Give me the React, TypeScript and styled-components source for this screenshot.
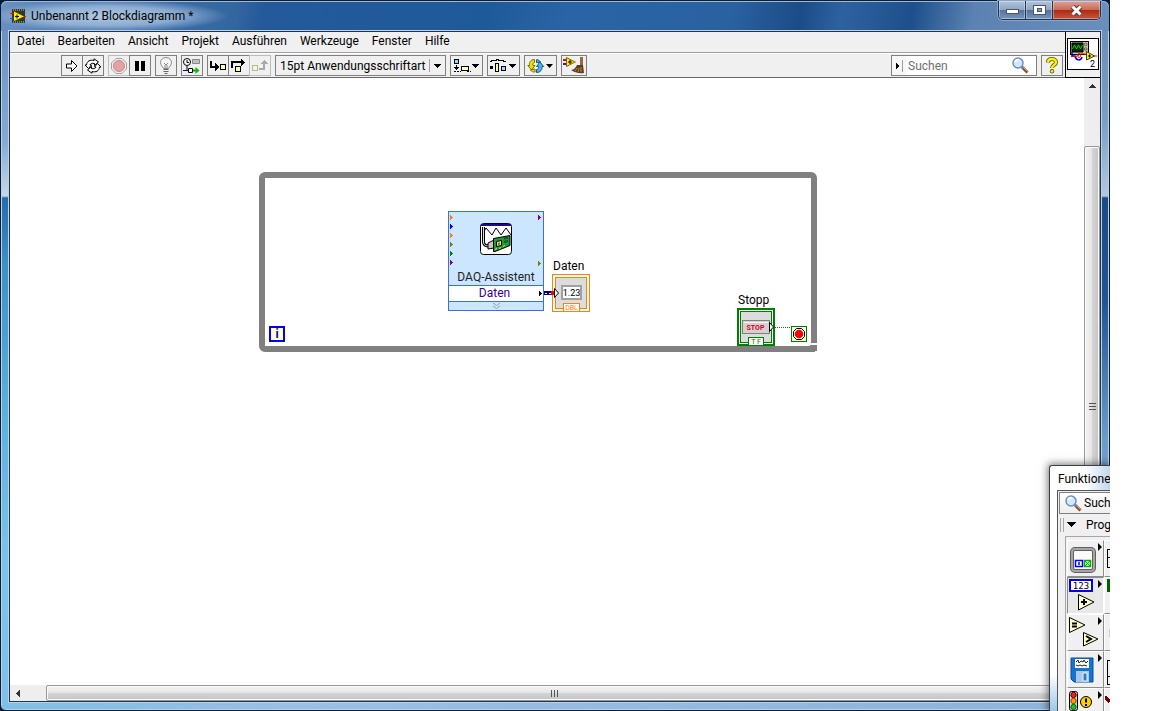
import React from "react";
import styled, { createGlobalStyle, css } from "styled-components";

const ink = "#000000";
const face = "#f0f0f0";
const line = "#7f7f7f";
const wireGreen = "#008000";
const orange = "#ff8000";

const GlobalStyle = createGlobalStyle`
  *, *::before, *::after { box-sizing: border-box; }
  body { margin: 0; background: #ffffff; color: ${ink}; font: 12px/16px Roboto, "Liberation Sans", sans-serif; }
  button, input, select { font: inherit; color: inherit; margin: 0; padding: 0; border-radius: 0; }
  svg { display: block; flex: none; }
`;

/* ---------- window frame ---------- */

const Desktop = styled.div`
  height: 100vh;
  padding-right: 42px;
  overflow: hidden;
`;

const Screen = styled.div`
  position: relative;
  height: 100%;
  overflow: hidden;
  background: #0b1a33;
`;

const Window = styled.main`
  display: flex;
  flex-direction: column;
  height: 100%;
  padding: 0 8px 8px;
  border: 1px solid #0a1c38;
  border-radius: 7px 7px 6px 6px;
  box-shadow: inset 0 0 0 1px #b9d3ea;
  background:
    linear-gradient(180deg, #6d93c2 31px, #85a9d2 140px, #c6d8ea 195px, #276bab 197px, #3b90c6 260px, #57b0da 400px, #7cc3ea 560px, #7fc0e8 100%) left top / 9px 100% no-repeat,
    linear-gradient(180deg, #6f8fb8 31px, #7d9dc4 120px, #b4c7dd 195px, #1c4a84 197px, #1f5590 300px, #6d9cc9 440px, #8db6dc 100%) right top / 9px 100% no-repeat,
    linear-gradient(90deg, #7fc0e8 0, #82bfe6 60px, #9bbfe2 300px, #8fb2d8 100%);
`;

const TitleBar = styled.header`
  display: flex;
  align-items: flex-start;
  height: 30px;
  margin: 0 -8px;
  padding: 0 8px 0 9px;
  border-radius: 6px 6px 0 0;
  box-shadow: inset 0 1px 0 #9db9dc;
  background:
    radial-gradient(ellipse 120px 16px at 108px 15px, rgba(214, 228, 243, 0.75) 0, rgba(190, 211, 234, 0.6) 60%, rgba(160, 188, 220, 0) 100%),
    linear-gradient(100deg, #6c91c0 0, #4575b0 90px, #33659f 235px, #245a9a 260px, #1f5a98 480px, #2a64a4 560px, #2a62a0 720px, #1c4c86 790px, #2e629f 830px, #1e4f8b 900px, #5b82b2 960px, #6a8fbc 100%);
`;

const TitleText = styled.h1`
  flex: 1;
  display: flex;
  align-items: center;
  gap: 5px;
  margin: 0;
  height: 30px;
  font-size: 12px;
  font-weight: 400;
`;

const CaptionButtons = styled.div`
  display: flex;
  border: 1px solid #26344b;
  border-top: 0;
  border-radius: 0 0 5px 5px;
  overflow: hidden;
  box-shadow: 0 0 0 1px #86a5cb;
`;

const CaptionButton = styled.button<{ $close?: boolean }>`
  display: grid;
  place-items: center;
  width: ${(p) => (p.$close ? 47 : 27)}px;
  height: 18px;
  border: 0;
  border-right: ${(p) => (p.$close ? "0" : "1px solid #26344b")};
  box-shadow: inset 0 0 0 1px rgba(255, 255, 255, 0.35);
  background: ${(p) =>
    p.$close
      ? "linear-gradient(180deg, #dda396 0, #cb6a59 48%, #ae2a16 52%, #c4573f 100%)"
      : "linear-gradient(180deg, #b3c3d8 0, #8ea6c6 48%, #53749f 52%, #7795bd 100%)"};
`;

const Client = styled.div`
  flex: 1;
  min-height: 0;
  display: flex;
  flex-direction: column;
  border: 1px solid #22344c;
  outline: 1px solid #b9d3ea;
  background: #ffffff;
`;

/* ---------- menu and toolbar ---------- */

const Head = styled.div`
  display: flex;
  height: 46px;
  background: ${face};
`;

const HeadMain = styled.div`
  flex: 1;
  display: flex;
  flex-direction: column;
  border-bottom: 1px solid #666666;
`;

const Menu = styled.nav`
  display: flex;
  align-items: center;
  gap: 13px;
  height: 21px;
  padding: 0 7px 2px;
  border-bottom: 1px solid #a0a0a0;
`;

const MenuItem = styled.button`
  border: 0;
  background: none;
`;

const Toolbar = styled.div`
  flex: 1;
  display: flex;
  align-items: center;
  gap: 4px;
  padding: 0 2px 0 51px;
  border-top: 1px solid #ffffff;
`;

const Group = styled.div`
  display: flex;
  button + button { margin-left: -1px; }
`;

const ToolButton = styled.button<{ $w?: number }>`
  display: flex;
  align-items: center;
  justify-content: center;
  width: ${(p) => p.$w ?? 22}px;
  height: 21px;
  border: 1px solid ${line};
  background: ${face};
  &:disabled { border-color: #bdbdbd; }
`;

const FontPicker = styled.label`
  position: relative;
  width: 171px;
  height: 21px;
  border: 1px solid ${line};
  background: ${face};
  select {
    width: 100%;
    height: 100%;
    padding: 0 18px 0 4px;
    border: 0;
    background: none;
    appearance: none;
  }
  svg { position: absolute; right: 0; top: 0; pointer-events: none; }
`;

const Spacer = styled.div`flex: 1;`;

const SearchBox = styled.div`
  display: flex;
  align-items: center;
  width: 146px;
  height: 21px;
  padding-right: 7px;
  border: 1px solid ${line};
  background: #ffffff;
  input {
    flex: 1;
    min-width: 0;
    border: 0;
    outline: 0;
    background: none;
    padding-left: 2px;
  }
  input::placeholder { color: #707070; opacity: 1; }
  button { border: 0; background: none; }
`;

const IconPane = styled.div`
  width: 35px;
  padding: 6px 1px;
  border-left: 1px solid ${ink};
  border-bottom: 1px solid ${ink};
`;

/* ---------- work area ---------- */

const Work = styled.div`
  flex: 1;
  min-height: 0;
  display: grid;
  grid-template-columns: 1fr 16px;
  grid-template-rows: 1fr 16px;
`;

const Canvas = styled.section`
  position: relative;
  overflow: hidden;
`;

const Track = styled.div<{ $vertical?: boolean }>`
  display: flex;
  flex-direction: ${(p) => (p.$vertical ? "column" : "row")};
  padding: ${(p) => (p.$vertical ? "0 0 20px" : "0 20px 0 0")};
  background: #eeeeee;
`;

const ScrollArrow = styled.button<{ $vertical?: boolean }>`
  display: grid;
  place-items: center;
  width: 16px;
  height: 16px;
  margin: ${(p) => (p.$vertical ? "0 0 52px" : "0 20px 0 0")};
  border: 0;
  background: none;
`;

const Thumb = styled.div<{ $vertical?: boolean }>`
  flex: 1;
  display: grid;
  place-items: center;
  border: 1px solid #979797;
  border-radius: 2px;
  box-shadow: inset 0 0 0 1px #fafafa;
  background: linear-gradient(${(p) => (p.$vertical ? "90deg" : "180deg")}, #f4f4f4 0, #e6e6e6 46%, #d3d3d3 54%, #c4c4c4 100%);
`;

const Corner = styled.div`background: ${face};`;

/* ---------- block diagram nodes, placed freely on the canvas ---------- */

const Node = styled.div<{ $x: number; $y: number }>`
  position: absolute;
  left: ${(p) => p.$x}px;
  top: ${(p) => p.$y}px;
`;

const Loop = styled(Node)`
  width: 558px;
  height: 180px;
  border: 6px solid #808080;
  border-radius: 6px 6px 0 6px;
`;

const Express = styled(Node)`
  display: flex;
  flex-direction: column;
  align-items: center;
  width: 96px;
  height: 100px;
  border: 1px solid #3b6fe8;
  background: #cce6ff;
`;

const ExpressBody = styled.div`
  display: flex;
  justify-content: space-between;
  width: 100%;
  height: 57px;
  padding: 3px 1px 0;
`;

const ExpressIcon = styled.div`padding-top: 8px;`;

const ExpressName = styled.div`
  height: 16px;
  line-height: 16px;
  color: #222222;
`;

const ExpressOutput = styled.div`
  position: relative;
  width: 100%;
  height: 17px;
  padding-right: 3px;
  border: solid #3b6fe8;
  border-width: 1px 0;
  background: #ffffff;
  color: #330099;
  line-height: 15px;
  text-align: center;
  svg { position: absolute; right: 0; top: 5px; }
`;

const Constant = styled(Node)`
  width: 16px;
  height: 16px;
  border: 2px solid #0000ff;
  background: #ffffcc;
  color: #0000c8;
  font-weight: 700;
  line-height: 12px;
  text-align: center;
`;

/* ---------- functions palette, floating over the window ---------- */

const Palette = styled.aside`
  position: absolute;
  right: 0;
  top: 465px;
  bottom: 0;
  width: 61px;
  display: flex;
  flex-direction: column;
  padding-left: 7px;
  overflow: hidden;
  border: solid #3a3f46;
  border-width: 1px 0 0 1px;
  border-top-left-radius: 3px;
  background: linear-gradient(180deg, rgba(255, 255, 255, 0) 85%, #9cc6e8 100%), linear-gradient(90deg, #ffffff 0, #fbfdff 60%, #c3d6ea 100%);
`;

const PaletteShadow = styled.div`
  position: absolute;
  right: 0;
  top: 465px;
  bottom: 0;
  width: 60px;
  box-shadow: -1px 0 8px 1px rgba(0, 0, 0, 0.55);
`;

const PaletteTitle = styled.h2`
  margin: 0;
  height: 24px;
  padding-left: 1px;
  font-size: 12px;
  font-weight: 400;
  line-height: 26px;
  white-space: nowrap;
`;

const PaletteBody = styled.div`
  flex: 1;
  min-height: 0;
  overflow: hidden;
  border: solid #555555;
  border-width: 1px 0 0 1px;
  background: ${face};
`;

const PaletteSearch = styled.button`
  display: flex;
  align-items: center;
  gap: 2px;
  width: 80px;
  height: 22px;
  margin: 1px 0 0 1px;
  padding-left: 5px;
  border: 1px solid ${line};
  background: linear-gradient(180deg, #ffffff, #eeeeee);
`;

const PaletteCategory = styled.button`
  display: flex;
  align-items: center;
  gap: 10px;
  height: 22px;
  padding-left: 2px;
  border: 0;
  background: none;
`;

const PaletteGrid = styled.div`
  display: grid;
  grid-template-columns: 37px 37px;
  grid-auto-rows: 37px;
  width: 80px;
  margin-left: 7px;
  padding: 3px 1px;
  border: solid #a6a6a6;
  border-width: 1px 0 0 1px;
`;

const PaletteCell = styled.button<{ $active?: boolean }>`
  border: 1px solid;
  border-color: #ffffff #8c8c8c #8c8c8c #ffffff;
  background: ${face};
  overflow: hidden;
  ${(p) => p.$active && css`border-color: #8c8c8c #ffffff #ffffff #8c8c8c; background: #e8e8e8;`}
`;

/* ---------- drawings ---------- */

const Svg = ({ w, h, crisp = true, children }: { w: number; h: number; crisp?: boolean; children: React.ReactNode }) => (
  <svg width={w} height={h} viewBox={`0 0 ${w} ${h}`} shapeRendering={crisp ? "crispEdges" : "auto"} fill="none" aria-hidden="true">
    {children}
  </svg>
);

const AppIcon = () => (
  <Svg w={16} h={14} crisp={false}>
    <path d="M2 0h13v14H2z" fill="#2f3a2a" />
    <path d="M3 1h11M3 13h11" stroke="#c8c8a8" strokeDasharray="1 1" />
    <path d="M0 4.500h4" stroke="#ff0000" />
    <path d="M0 9.500h4" stroke="#2040ff" />
    <path d="M13 7.500h3" stroke="#ff0000" />
    <path d="M4 2.500l10 5-10 4.500z" fill="#ffee00" />
    <path d="M5 7.500h4M7 5.500v4" stroke="#111" />
  </Svg>
);

const RunIcon = () => (
  <Svg w={14} h={14} crisp={false}>
    <path d="M1.500 5h5V1.500L12 7l-5.500 5.500V9h-5z" fill="#fff" stroke="#000" />
  </Svg>
);

const RunContinuousIcon = () => (
  <Svg w={18} h={16} crisp={false}>
    <path d="M2.500 7C3 3 6 1.500 10 2.500V.8L14.500 4 10.500 7.500V5.500C8 5 6.500 5.500 6 7h1.500L4.500 10.500 1 7z" fill="#fff" stroke="#000" />
    <path d="M15.500 9c-.5 4-3.500 5.500-7.500 4.500v1.700L3.500 12 7.500 8.500v2c2.500.5 4 0 4.500-1.500h-1.500L13.500 5.500 17 9z" fill="#fff" stroke="#000" />
  </Svg>
);

const AbortIcon = () => (
  <Svg w={16} h={16} crisp={false}>
    <path d="M5 .5h6l4.500 4.500v6L11 15.500H5L.5 11V5z" fill="#f4eaea" stroke="#a9a0a0" />
    <circle cx="8" cy="8" r="5.500" fill="#e3a3a3" stroke="#c98888" />
  </Svg>
);

const PauseIcon = () => (
  <Svg w={12} h={12}>
    <path d="M1 1h4v10H1zM7 1h4v10H7z" fill="#000" />
  </Svg>
);

const BulbIcon = () => (
  <Svg w={14} h={18} crisp={false}>
    <path d="M4.500 11.500C4 9.500 1.500 8.500 1.500 5.500a5.500 5 0 0 1 11 0c0 3-2.500 4-3 6z" fill="#f6f6f6" stroke="#8a8a8a" />
    <path d="M5 6l2 2 2-2M6 8v3M8 8v3" stroke="#888" />
    <path d="M4.500 12.500h5M4.500 14.500h5M5.500 16.500h3" stroke="#666" />
  </Svg>
);

const RetainIcon = () => (
  <Svg w={18} h={16} crisp={false}>
    <circle cx="4" cy="4" r="3.500" fill="#fff" stroke="#000" />
    <path d="M4 2v2.500h2M4 8v4" stroke="#000" />
    <path d="M9.500 1.500h7v4h-7z" fill="#c0c0c0" stroke="#888" />
    <path d="M0 12.500h5" stroke="#0000ff" />
    <path d="M5.500 10.500h4v4h-4z" fill="#fff" stroke="#000" />
    <path d="M10 12.500h3" stroke="#00a000" strokeWidth="2" />
    <path d="M12.500 9l4 3.500-4 3.500z" fill="#00c000" />
  </Svg>
);

const StepBox = ({ x, y, dim }: { x: number; y: number; dim?: boolean }) => (
  <rect x={x + 0.5} y={y + 0.5} width="5" height="5" fill={dim ? "#f5f5d0" : "#ffffa0"} stroke={dim ? "#b8b890" : "#000"} />
);

const StepIntoIcon = () => (
  <Svg w={18} h={14}>
    <path d="M2 2v6h5" stroke="#000" strokeWidth="2" />
    <path d="M6 4l4 4-4 4z" fill="#000" />
    <StepBox x={11} y={5} />
  </Svg>
);
const StepOverIcon = () => (
  <Svg w={18} h={14}>
    <path d="M2 9V3h11" stroke="#000" strokeWidth="2" />
    <path d="M11 0l4 3-4 4z" fill="#000" />
    <StepBox x={5} y={7} />
  </Svg>
);
const StepOutIcon = () => (
  <Svg w={18} h={14}>
    <StepBox x={1} y={6} dim />
    <path d="M8 10h5V4" stroke="#a8a8a8" strokeWidth="2" />
    <path d="M9 5l4-4 4 4z" fill="#a8a8a8" />
  </Svg>
);

const Caret = () => <path d="M0 0h7l-3.500 4z" fill="#000" />;

const AlignIcon = () => (
  <Svg w={28} h={16}>
    <path d="M1.500 1.500h4v4h-4z" fill="#8fe0ff" stroke="#000" />
    <path d="M3.500 7v4M1 13.500h7M14 13.500h4" stroke="#000" strokeDasharray="2 1" />
    <path d="M1 9h5l-2.500 3z" fill="#000" />
    <path d="M8.500 8.500h7v4h-7z" fill="#ffffa0" stroke="#000" />
    <g transform="translate(19 6)"><Caret /></g>
  </Svg>
);

const DistributeIcon = () => (
  <Svg w={28} h={16}>
    <path d="M0 3.500h1.500v-1h5v-1h2v1h5v1H16" stroke="#000" />
    <path d="M0 8h3v3H0z" fill="#000" />
    <path d="M5.500 5.500h3v8h-3z" fill="#ffffa0" stroke="#000" />
    <path d="M11.500 8.500h4v4h-4z" fill="#8fe0ff" stroke="#000" />
    <g transform="translate(19 6)"><Caret /></g>
  </Svg>
);

const ReorderIcon = () => (
  <Svg w={28} h={16} crisp={false}>
    <path d="M7.500 1.500C3.500 1.500 2 4.500 2.500 7.500H.8L4.500 12 8 7.500H6C5.500 6 6 4.800 7.500 4.500z" fill="#f0e000" stroke="#7a7000" />
    <path d="M3.500 12c1 1.500 3 2.300 4.500 2v-3z" fill="#f0e000" stroke="#7a7000" />
    <path d="M9.500 14.500c4 0 6-3 5.500-6h1.700L13 4 9.500 8.500h2c.5 1.500 0 2.700-2 3z" fill="#4fb3dc" stroke="#135a80" />
    <path d="M13.500 4c-1-1.700-2.500-2.300-4-2.300v3z" fill="#4fb3dc" stroke="#135a80" />
    <g transform="translate(19 6)"><Caret /></g>
  </Svg>
);

const CleanUpIcon = () => (
  <Svg w={22} h={17} crisp={false}>
    <path d="M0 3h4" stroke="#ff0000" strokeWidth="2" />
    <path d="M0 7h4" stroke="#1020ff" strokeWidth="2" />
    <path d="M3.500.5L12 5l-8.500 4.500z" fill="#fff000" stroke="#806000" />
    <path d="M5 5h4M7 3v4" stroke="#000" />
    <path d="M10 5h3" stroke="#ff8000" />
    <path d="M17 0h3v9h-3z" fill="#9a6a35" />
    <path d="M14 8h6l1 8c-5 1-10-1-13-3 3 0 5-3 6-5z" fill="#5f3d1c" />
    <path d="M12 14l2-3M15 15l1-4M18 15v-5" stroke="#b68a50" />
  </Svg>
);

const LensIcon = () => (
  <Svg w={17} h={17} crisp={false}>
    <path d="M10 10l5.500 5.500" stroke="#8a4f2a" strokeWidth="3" />
    <path d="M10.500 9.500l5 5" stroke="#e0a070" />
    <path d="M9 9l2.500 2.500" stroke="#6f80b8" strokeWidth="2" />
    <circle cx="6" cy="6" r="5" fill="#cfeaff" stroke="#6d8cc4" strokeWidth="1.500" />
    <path d="M3 5c.5-1.500 2-2.500 4-2" stroke="#fff" strokeWidth="2" />
  </Svg>
);

const HelpIcon = () => (
  <Svg w={14} h={17} crisp={false}>
    <path d="M3 5.500C3 2.500 5 2 7 2s4 1 4 3.300C11 8 7 8 7 11" stroke="#55550a" strokeWidth="4" />
    <circle cx="7" cy="14.300" r="2.200" fill="#55550a" />
    <path d="M3 5.500C3 2.500 5 2 7 2s4 1 4 3.300C11 8 7 8 7 11" stroke="#ffef00" strokeWidth="2.400" />
    <circle cx="7" cy="14.300" r="1.400" fill="#ffef00" />
  </Svg>
);

const ViIcon = () => (
  <svg width="32" height="32" viewBox="0 0 32 32" fill="none" role="img" aria-label="VI">
    <path d="M.5.500h31v31H.5z" fill="#fff" stroke="#000" shapeRendering="crispEdges" />
    <path d="M3.500 3.500h18v13h-18z" fill="#c8c8a8" stroke="#000" shapeRendering="crispEdges" />
    <path d="M5 5h11v9H5z" fill="#002800" stroke="#000" />
    <path d="M5.500 11l2-4 2 4 2-4 2 4 2-4" stroke="#00e000" />
    <circle cx="18.700" cy="6.500" r="1.300" stroke="#555" />
    <circle cx="18.700" cy="11" r="1.300" stroke="#555" />
    <path d="M5 14v4h3c1 5 6 5 7 1" stroke="#0000d0" strokeWidth="1.500" />
    <path d="M4 18.500h5c2 0 1-3 3-3s2 4 0 4-1-3 2-3.500 4 .5 6 .5M27 18h3" stroke="#f00000" />
    <path d="M19.500 13.500l8 4.500-8 4z" fill="#fff000" stroke="#404000" />
    <path d="M21 18h3M22.500 16.500v3" stroke="#000" />
    <text x="23" y="29" fontSize="9" fill="#000">2</text>
  </svg>
);

const DaqIcon = () => (
  <Svg w={32} h={32} crisp={false}>
    <rect x=".5" y=".5" width="31" height="31" rx="3" fill="#fff" stroke="#000" />
    <path d="M1 1h30v2H1z" fill="#1c0a90" />
    <path d="M2 12l4-7 6 7 4-7 5 7 5-7 5 7" stroke="#000" />
    <path d="M3.500 4v15c0 3 2 4 6 4" stroke="#000" strokeWidth="3" />
    <path d="M3.500 4v15c0 3 2 4 6 4" stroke="#ddd" />
    <path d="M8 20l6-3v8l-6 1z" fill="#c8c8c8" stroke="#000" />
    <path d="M13.500 15.500L30 12.500v10L15 28.500h-1.500z" fill="#1e9a3c" stroke="#000" />
    <path d="M16.500 18.500l5-1v5l-5 1z" fill="#ffe040" stroke="#000" />
    <path d="M18 20l2-.5v2l-2 .5z" fill="#1e9a3c" />
    <path d="M24 15.500l4-1M24 19l4-1" stroke="#055a20" strokeWidth="2" />
    <path d="M15 26.500l2-1M19 25.500l2-1M23 23.500l2-1" stroke="#ffe040" />
  </Svg>
);

const pinsLeft = [orange, "#0000ff", orange, "#808000", wireGreen, "#800080"];

const Pins = ({ pins }: { pins: { y: number; color: string }[] }) => (
  <Svg w={4} h={54}>
    {pins.map((p) => (
      <path key={p.y} d={`M0 ${p.y}h1v1h1v1h1v1h-1v1h-1v1h-1z`} fill={p.color} />
    ))}
  </Svg>
);

const DatenTerminal = () => (
  <svg width="46" height="38" viewBox="0 0 46 38" fill="none" role="img" aria-label="Daten DBL">
    <g shapeRendering="crispEdges">
      <path d="M8.500.5h37v37h-37z" fill="#fff" stroke={orange} />
      <path d="M11.500 3.500h31v31h-31z" fill="#dcdcdc" stroke={orange} />
      <path d="M17 11h21v15H17z" fill="#a0a0a0" />
      <path d="M19 13h17v11H19z" fill="#fff" />
      <path d="M19.500 29.500h16v8h-16z" fill="#fff" stroke={orange} />
      <path d="M0 19h9" stroke="#000080" strokeWidth="4" />
      <path d="M1 19h8" stroke="#fff" strokeDasharray="2 2" />
      <path d="M7 17h4v4H7z" fill="#f00" />
    </g>
    <path d="M10.500 14.500l4 4.500-4 4.500z" fill="#fff" stroke="#000" />
    <text x="27.500" y="22" fontSize="9" fill="#000" textAnchor="middle">1.23</text>
    <text x="27.500" y="36" fontSize="7" fill={orange} textAnchor="middle">DBL</text>
  </svg>
);

const StoppTerminal = () => (
  <svg width="54" height="38" viewBox="0 0 54 38" fill="none" role="img" aria-label="Stopp TF">
    <g shapeRendering="crispEdges">
      <path d="M1 1h36v36H1z" fill="#fff" stroke={wireGreen} strokeWidth="2" />
      <path d="M3.500 3.500h31v31h-31z" fill="#dcdcdc" stroke={wireGreen} />
      <path d="M5.500 12.500h27v13h-27z" fill="#d4d0d0" stroke="#808080" />
      <path d="M7 14h24" stroke="#f4f4f4" />
      <path d="M11.500 29.500h15v8h-15z" fill="#fff" stroke={wireGreen} />
      <path d="M38 19.500h16" stroke={wireGreen} strokeDasharray="1 1" />
    </g>
    <path d="M32.500 14.500l4 4.500-4 4.500z" fill="#fff" stroke="#000" />
    <text x="18.500" y="21.500" fontSize="7" fontWeight="700" fill="#d8001c" textAnchor="middle">STOP</text>
    <text x="19" y="36" fontSize="7" fill={wireGreen} textAnchor="middle">T F</text>
  </svg>
);

const StopCondition = () => (
  <Svg w={16} h={16} crisp={false}>
    <path d="M.5.500h15v15H.5z" fill="#ffffcc" stroke={wireGreen} shapeRendering="crispEdges" />
    <path d="M5.500 2.500h5l3 3v5l-3 3h-5l-3-3v-5z" fill="#fff" stroke="#000" />
    <circle cx="8" cy="8" r="4.300" fill="#f00" />
  </Svg>
);

const LoopCorner = () => (
  <Svg w={8} h={11}>
    <path d="M0 1h8v3H2v1H0z" fill="#fff" />
    <path d="M0 3h7v7H0z" fill="#808080" />
    <path d="M0 2h8v1H0z" fill="#fff" />
    <path d="M5 9h2v1H5z" fill="#fff" />
  </Svg>
);

const CellArrow = () => <path d="M30 5l4 4-4 4z" fill="#000" />;

const StructuresIcon = () => (
  <Svg w={35} h={35} crisp={false}>
    <rect x="4" y="8" width="22" height="22" rx="3" fill="#fafafa" stroke="#606060" strokeWidth="4" />
    <rect x="4" y="8" width="22" height="22" rx="3" stroke="#a5a5a5" strokeWidth="2" />
    <path d="M7.500 19.500h7v6h-7z" fill="#fff" stroke="#00f" strokeWidth="1.500" />
    <path d="M11 21v3" stroke="#00f" strokeWidth="1.500" />
    <path d="M16.500 19.500h6v6h-6z" fill="#d0ffd0" stroke="#00b000" strokeWidth="1.500" />
    <path d="M17 20l5 5M22 20l-5 5" stroke="#00b000" />
    <g transform="translate(0 -3)"><CellArrow /></g>
  </Svg>
);
const NumericIcon = () => (
  <Svg w={35} h={35} crisp={false}>
    <path d="M2 2h22v11H2z" fill="#fff" stroke="#00f" strokeWidth="2" shapeRendering="crispEdges" />
    <text x="13" y="11" fontSize="9" fill="#000" textAnchor="middle" fontFamily="DejaVu Sans Mono, monospace">123</text>
    <path d="M10.500 16.500L26 24l-15.500 8z" fill="#ffffcc" stroke="#000" />
    <path d="M13 24h6M16 21v6" stroke="#000" strokeWidth="2" />
    <g transform="translate(0 -3)"><CellArrow /></g>
  </Svg>
);
const CompareIcon = () => (
  <Svg w={35} h={35} crisp={false}>
    <path d="M1.500 2.500L17 10 1.500 17.500zM15.500 17.500L30 24l-14.500 7z" fill="#ffffcc" stroke="#000" />
    <path d="M4 8.500h5M4 11.500h5" stroke="#000" strokeWidth="2" />
    <path d="M18 21l5 3-5 3" stroke="#000" strokeWidth="2" />
    <g transform="translate(0 -3)"><CellArrow /></g>
  </Svg>
);
const FileIcon = () => (
  <Svg w={35} h={35} crisp={false}>
    <path d="M3 6h22v24H6l-3-3z" fill="#1673cf" stroke="#0a4d99" />
    <path d="M7 7h14v9H7z" fill="#fff" />
    <path d="M8 10l2-2 1 3 2-2 2 1 1-2 2 3 2-2M8 13l2 1 2-1 2 1 2-1 3 1" stroke="#222" />
    <path d="M8 19h13v11H8z" fill="#a9c9e6" />
    <path d="M15 21h4v8h-4z" fill="#2d7cca" stroke="#eaf4ff" />
    <g transform="translate(0 -3)"><CellArrow /></g>
  </Svg>
);
const DialogIcon = () => (
  <Svg w={35} h={35} crisp={false}>
    <rect x="1.500" y="2.500" width="8" height="19" rx="2" fill="#ddd" stroke="#000" />
    <circle cx="5.500" cy="6" r="2.700" fill="#f02020" stroke="#600" />
    <circle cx="5.500" cy="12" r="2.700" fill="#ff9a00" stroke="#840" />
    <circle cx="5.500" cy="18" r="2.700" fill="#20c020" stroke="#060" />
    <circle cx="18" cy="13" r="5.500" fill="#ffd000" stroke="#000" />
    <path d="M18 9.500v4M18 15v2" stroke="#000" strokeWidth="2" />
    <g transform="translate(0 -3)"><CellArrow /></g>
  </Svg>
);

const edgeMarks = ["M2.500 8h4M2.500 8v18h4M2.500 16h4", "", "M4 14v8", "M2.500 8h5M2.500 8v24h5M2.500 24h5", "M0 8l5 5"];
const EdgeIcon = ({ row }: { row: number }) => (
  <Svg w={35} h={35}>
    {row === 1 ? <path d="M2 1h8v13H2z" fill="#006000" /> : <path d={edgeMarks[row]} stroke={row === 2 ? "#cccccc" : row === 4 ? "#700000" : "#000"} strokeWidth={row === 4 ? 3 : 1} />}
  </Svg>
);

const paletteRows = [
  { name: "Strukturen", Icon: StructuresIcon },
  { name: "Numerisch", Icon: NumericIcon },
  { name: "Vergleich", Icon: CompareIcon },
  { name: "Datei-I/O", Icon: FileIcon },
  { name: "Dialog", Icon: DialogIcon },
];

const menuItems = ["Datei", "Bearbeiten", "Ansicht", "Projekt", "Ausführen", "Werkzeuge", "Fenster", "Hilfe"];

export default function App() {
  return (
    <Desktop>
      <GlobalStyle />
      <Screen>
        <Window>
          <TitleBar>
            <TitleText><AppIcon />Unbenannt 2 Blockdiagramm *</TitleText>
            <CaptionButtons>
              <CaptionButton aria-label="Minimieren">
                <Svg w={13} h={10}><path d="M.5 4.500h12v4H.5z" fill="#fff" stroke="#4a566a" /></Svg>
              </CaptionButton>
              <CaptionButton aria-label="Maximieren">
                <Svg w={13} h={11}><path d="M.5.500h12v9H.5z" fill="#fff" stroke="#4a566a" /><path d="M4.500 3.500h4v3h-4z" fill="#7f98bb" stroke="#4a566a" /></Svg>
              </CaptionButton>
              <CaptionButton $close aria-label="Schließen">
                <Svg w={13} h={11} crisp={false}>
                  <path d="M2.500 1.500l8 8M10.500 1.500l-8 8" stroke="#5c3a3a" strokeWidth="5" />
                  <path d="M2.500 1.500l8 8M10.500 1.500l-8 8" stroke="#fff" strokeWidth="3" />
                </Svg>
              </CaptionButton>
            </CaptionButtons>
          </TitleBar>

          <Client>
            <Head>
              <HeadMain>
                <Menu>{menuItems.map((m) => <MenuItem key={m}>{m}</MenuItem>)}</Menu>
                <Toolbar>
                  <Group>
                    <ToolButton aria-label="Ausführen"><RunIcon /></ToolButton>
                    <ToolButton aria-label="Wiederholt ausführen"><RunContinuousIcon /></ToolButton>
                  </Group>
                  <Group>
                    <ToolButton disabled aria-label="Abbrechen"><AbortIcon /></ToolButton>
                    <ToolButton aria-label="Pause"><PauseIcon /></ToolButton>
                  </Group>
                  <ToolButton aria-label="Highlight-Funktion"><BulbIcon /></ToolButton>
                  <ToolButton aria-label="Verbindungswerte speichern"><RetainIcon /></ToolButton>
                  <Group>
                    <ToolButton aria-label="Hineinspringen"><StepIntoIcon /></ToolButton>
                    <ToolButton aria-label="Überspringen"><StepOverIcon /></ToolButton>
                    <ToolButton disabled aria-label="Herausspringen"><StepOutIcon /></ToolButton>
                  </Group>
                  <FontPicker>
                    <select aria-label="Schriftart" defaultValue="app">
                      <option value="app">15pt Anwendungsschriftart</option>
                    </select>
                    <Svg w={18} h={19}>
                      <path d="M2.500 3v13" stroke="#a0a0a0" />
                      <g transform="translate(7 8)"><Caret /></g>
                    </Svg>
                  </FontPicker>
                  <ToolButton $w={33} aria-label="Ausrichten"><AlignIcon /></ToolButton>
                  <ToolButton $w={33} aria-label="Verteilen"><DistributeIcon /></ToolButton>
                  <ToolButton $w={33} aria-label="Neu anordnen"><ReorderIcon /></ToolButton>
                  <ToolButton $w={26} aria-label="Diagramm aufräumen"><CleanUpIcon /></ToolButton>
                  <Spacer />
                  <SearchBox>
                    <button aria-label="Suchoptionen">
                      <Svg w={14} h={19}>
                        <path d="M0 0h14v19H0z" fill="#f7f7f7" />
                        <path d="M4 7l4 3-4 3z" fill="#000" />
                        <path d="M10.500 4v12" stroke="#a0a0a0" />
                      </Svg>
                    </button>
                    <input type="text" placeholder="Suchen" aria-label="Suchen" />
                    <button aria-label="Suche starten"><LensIcon /></button>
                  </SearchBox>
                  <ToolButton aria-label="Kontexthilfe"><HelpIcon /></ToolButton>
                </Toolbar>
              </HeadMain>
              <IconPane><ViIcon /></IconPane>
            </Head>

            <Work>
              <Canvas>
                <Loop $x={249} $y={94} />
                <Node $x={800} $y={264}><LoopCorner /></Node>
                <Constant $x={259} $y={248}>i</Constant>
                <Express $x={438} $y={133}>
                  <ExpressBody>
                    <Pins pins={pinsLeft.map((color, i) => ({ color, y: i * 9 }))} />
                    <ExpressIcon><DaqIcon /></ExpressIcon>
                    <Pins pins={[{ y: 0, color: "#800080" }, { y: 46, color: "#808000" }]} />
                  </ExpressBody>
                  <ExpressName>DAQ-Assistent</ExpressName>
                  <ExpressOutput>
                    Daten
                    <Svg w={4} h={6}><path d="M0 0h1v1h1v1h1v1h-1v1h-1v1h-1z" fill="#000" /></Svg>
                  </ExpressOutput>
                  <Svg w={9} h={8} crisp={false}><path d="M1 1l3.500 2.500L8 1M1 4l3.500 2.500L8 4" stroke="#8fa3b8" /></Svg>
                </Express>
                <Node $x={543} $y={180}>Daten</Node>
                <Node $x={534} $y={196}><DatenTerminal /></Node>
                <Node $x={728} $y={214}>Stopp</Node>
                <Node $x={727} $y={230}><StoppTerminal /></Node>
                <Node $x={781} $y={248}><StopCondition /></Node>
              </Canvas>
              <Track $vertical>
                <ScrollArrow $vertical aria-label="Nach oben"><Svg w={7} h={4}><path d="M0 4l3.500-4L7 4z" fill="#333" /></Svg></ScrollArrow>
                <Thumb $vertical><Svg w={7} h={8}><path d="M0 1.500h7M0 4.500h7M0 7.500h7" stroke="#555" /></Svg></Thumb>
              </Track>
              <Track>
                <ScrollArrow aria-label="Nach links"><Svg w={4} h={7}><path d="M4 0L0 3.500 4 7z" fill="#333" /></Svg></ScrollArrow>
                <Thumb><Svg w={8} h={7}><path d="M.5 0v7M3.500 0v7M6.500 0v7" stroke="#555" /></Svg></Thumb>
              </Track>
              <Corner />
            </Work>
          </Client>
        </Window>

        <PaletteShadow />
        <Palette aria-label="Palette">
          <PaletteTitle>Funktione</PaletteTitle>
          <PaletteBody>
            <PaletteSearch><LensIcon />Such</PaletteSearch>
            <PaletteCategory>
              <Svg w={16} h={14}>
                <path d="M.5 0v14M3.500 0v14" stroke="#a8a8a8" />
                <path d="M6 4h10l-5 5z" fill="#000" />
              </Svg>
              Prog
            </PaletteCategory>
            <PaletteGrid>
              {paletteRows.map(({ name, Icon }, i) => (
                <React.Fragment key={name}>
                  <PaletteCell $active={i === 1} aria-label={name}><Icon /></PaletteCell>
                  <PaletteCell aria-label={`${name} weitere`}><EdgeIcon row={i} /></PaletteCell>
                </React.Fragment>
              ))}
            </PaletteGrid>
          </PaletteBody>
        </Palette>
      </Screen>
    </Desktop>
  );
}
